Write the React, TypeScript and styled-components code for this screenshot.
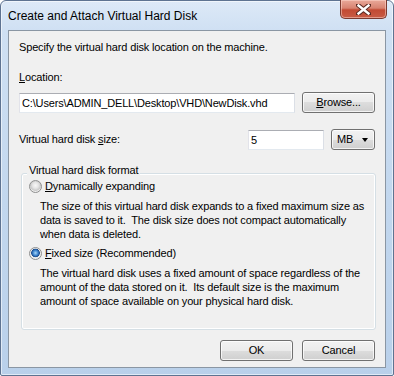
import React, { useState } from 'react'
import styled, { createGlobalStyle } from 'styled-components'

const GlobalStyle = createGlobalStyle`
  html, body {
    margin: 0;
    padding: 0;
    width: 394px;
    height: 376px;
    overflow: hidden;
    background: #ffffff;
  }
`

const App = () => {
  const [format, setFormat] = useState<'dynamic' | 'fixed'>('fixed')

  return (
    <>
      <GlobalStyle />
      <Win>
        <TitleBar>
          <Title>Create and Attach Virtual Hard Disk</Title>
          <CloseBtn>
            <svg width="15" height="11" viewBox="0 0 15 11">
              <path d="M2 1 L13 10 M13 1 L2 10" stroke="#5b2a22" strokeWidth="4.4" strokeLinecap="square" />
              <path d="M2.5 1.5 L12.5 9.5 M12.5 1.5 L2.5 9.5" stroke="#ffffff" strokeWidth="2.4" strokeLinecap="square" />
            </svg>
          </CloseBtn>
        </TitleBar>
        <Client>
          <Text>Specify the virtual hard disk location on the machine.</Text>
          <Label><u>L</u>ocation:</Label>
          <Row>
            <Input w="276px" defaultValue="C:\Users\ADMIN_DELL\Desktop\VHD\NewDisk.vhd" />
            <Button w="73px"><u>B</u>rowse...</Button>
          </Row>
          <SizeRow>
            <SizeLabel>Virtual hard disk <u>s</u>ize:</SizeLabel>
            <Input w="76px" defaultValue="5" />
            <Combo>
              MB
              <Arrow />
            </Combo>
          </SizeRow>
          <Group>
            <Caption>Virtual hard disk format</Caption>
            <RadioRow onClick={() => setFormat('dynamic')}>
              <Radio on={format === 'dynamic'} />
              <span><u>D</u>ynamically expanding</span>
            </RadioRow>
            <Desc>
              The size of this virtual hard disk expands to a fixed maximum size as<br />
              data is saved to it.&nbsp; The disk size does not compact automatically<br />
              when data is deleted.
            </Desc>
            <RadioRow onClick={() => setFormat('fixed')}>
              <Radio on={format === 'fixed'} />
              <span><u>F</u>ixed size (Recommended)</span>
            </RadioRow>
            <Desc>
              The virtual hard disk uses a fixed amount of space regardless of the<br />
              amount of the data stored on it.&nbsp; Its default size is the maximum<br />
              amount of space available on your physical hard disk.
            </Desc>
          </Group>
          <Footer>
            <Button w="73px">OK</Button>
            <Button w="73px">Cancel</Button>
          </Footer>
        </Client>
      </Win>
    </>
  )
}

const Win = styled.div`
width: 394px;
height: 376px;
box-sizing: border-box;
border: 1px solid #5e7391;
border-radius: 6px 6px 2px 2px;
background: linear-gradient(to bottom, #dde9f7 0px, #cfe0f3 30px, #c2d7ee 200px, #b9d0ea 376px);
box-shadow: inset 0 0 0 1px rgba(255, 255, 255, 0.55);
display: flex;
flex-direction: column;
font-family: "Liberation Sans", Arial, sans-serif;
color: #000;
`
const TitleBar = styled.div`
height: 29px;
flex-shrink: 0;
display: flex;
justify-content: space-between;
align-items: center;
padding: 0 6px 0 7px;
`
const Title = styled.div`
font-size: 12px;
line-height: 15px;
margin-top: 1px;
`
const CloseBtn = styled.div`
align-self: flex-start;
margin-top: -1px;
width: 45px;
height: 18px;
border: 1px solid #7a3a30;
border-top: none;
border-radius: 0 0 5px 5px;
background: linear-gradient(to bottom, #e9a99a 0%, #d88371 45%, #c24a33 55%, #c85c45 100%);
box-shadow: inset 0 0 0 1px rgba(255, 220, 210, 0.5);
display: flex;
align-items: center;
justify-content: center;
`
const Client = styled.div`
flex: 1;
margin: 0 7px 7px 7px;
border: 1px solid #8a96a3;
background: #f0f0f0;
padding: 9px 10px 0 10px;
display: flex;
flex-direction: column;
font-size: 11px;
line-height: 15px;
letter-spacing: -0.15px;
`
const Text = styled.div`
height: 15px;
`
const Label = styled.div`
margin-top: 15px;
`
const Row = styled.div`
margin-top: 7px;
display: flex;
justify-content: space-between;
align-items: center;
height: 21px;
`
const SizeRow = styled.div`
margin-top: 16px;
display: flex;
align-items: center;
height: 21px;
gap: 7px;
`
const SizeLabel = styled.div`
flex: 1;
`
const Input = styled.input<{ w: string }>`
width: ${({ w }) => w};
height: 20px;
box-sizing: border-box;
border: 1px solid;
border-color: #abadb3 #dbdfe6 #e3e9ef #e2e3ea;
background: #fff;
padding: 0 2px;
margin: 0;
font-family: inherit;
font-size: 11px;
letter-spacing: -0.15px;
color: #000;
outline: none;
`
const Button = styled.div<{ w: string }>`
width: ${({ w }) => w};
height: 21px;
box-sizing: border-box;
border: 1px solid #707070;
border-radius: 3px;
background: linear-gradient(to bottom, #f2f2f2 0%, #ebebeb 50%, #dddddd 50%, #cfcfcf 100%);
box-shadow: inset 0 0 0 1px rgba(255, 255, 255, 0.75);
display: flex;
align-items: center;
justify-content: center;
cursor: default;
`
const Combo = styled.div`
width: 44px;
height: 21px;
box-sizing: border-box;
border: 1px solid #707070;
border-radius: 3px;
background: linear-gradient(to bottom, #f2f2f2 0%, #ebebeb 50%, #dddddd 50%, #cfcfcf 100%);
box-shadow: inset 0 0 0 1px rgba(255, 255, 255, 0.75);
display: flex;
align-items: center;
justify-content: space-between;
padding: 0 6px 0 5px;
`
const Arrow = styled.div`
width: 0;
height: 0;
border-left: 3.5px solid transparent;
border-right: 3.5px solid transparent;
border-top: 4px solid #000;
margin-top: 1px;
`
const Group = styled.div`
position: relative;
margin: 23px -1px 0 2px;
border: 1px solid #d5dfe5;
border-radius: 3px;
box-shadow: inset 0 0 0 1px #fff;
padding: 5px 6px 16px 7px;
`
const Caption = styled.div`
position: absolute;
top: -11px;
left: 5px;
padding: 0 2px;
background: #f0f0f0;
`
const RadioRow = styled.div`
display: flex;
align-items: center;
gap: 3px;
height: 15px;
margin-bottom: 5px;
`
const Radio = styled.div<{ on: boolean }>`
width: 13px;
height: 13px;
box-sizing: border-box;
border-radius: 50%;
border: 1px solid #8e8f8f;
background: ${({ on }) =>
  on
    ? 'radial-gradient(circle at 50% 45%, #a9d6f7 0px, #3f86cf 2.5px, #1b4c8e 4px, #e8e8e8 4.6px, #f4f4f4 6px)'
    : 'radial-gradient(circle at 50% 40%, #f8f8f8 0px, #e4e4e4 3px, #c9c9c9 5px, #efefef 6px)'};
`
const Desc = styled.div`
padding-left: 11px;
line-height: 14px;
margin-bottom: 5px;
white-space: nowrap;
`
const Footer = styled.div`
margin-top: 10px;
display: flex;
justify-content: flex-end;
gap: 9px;
`

export default App
